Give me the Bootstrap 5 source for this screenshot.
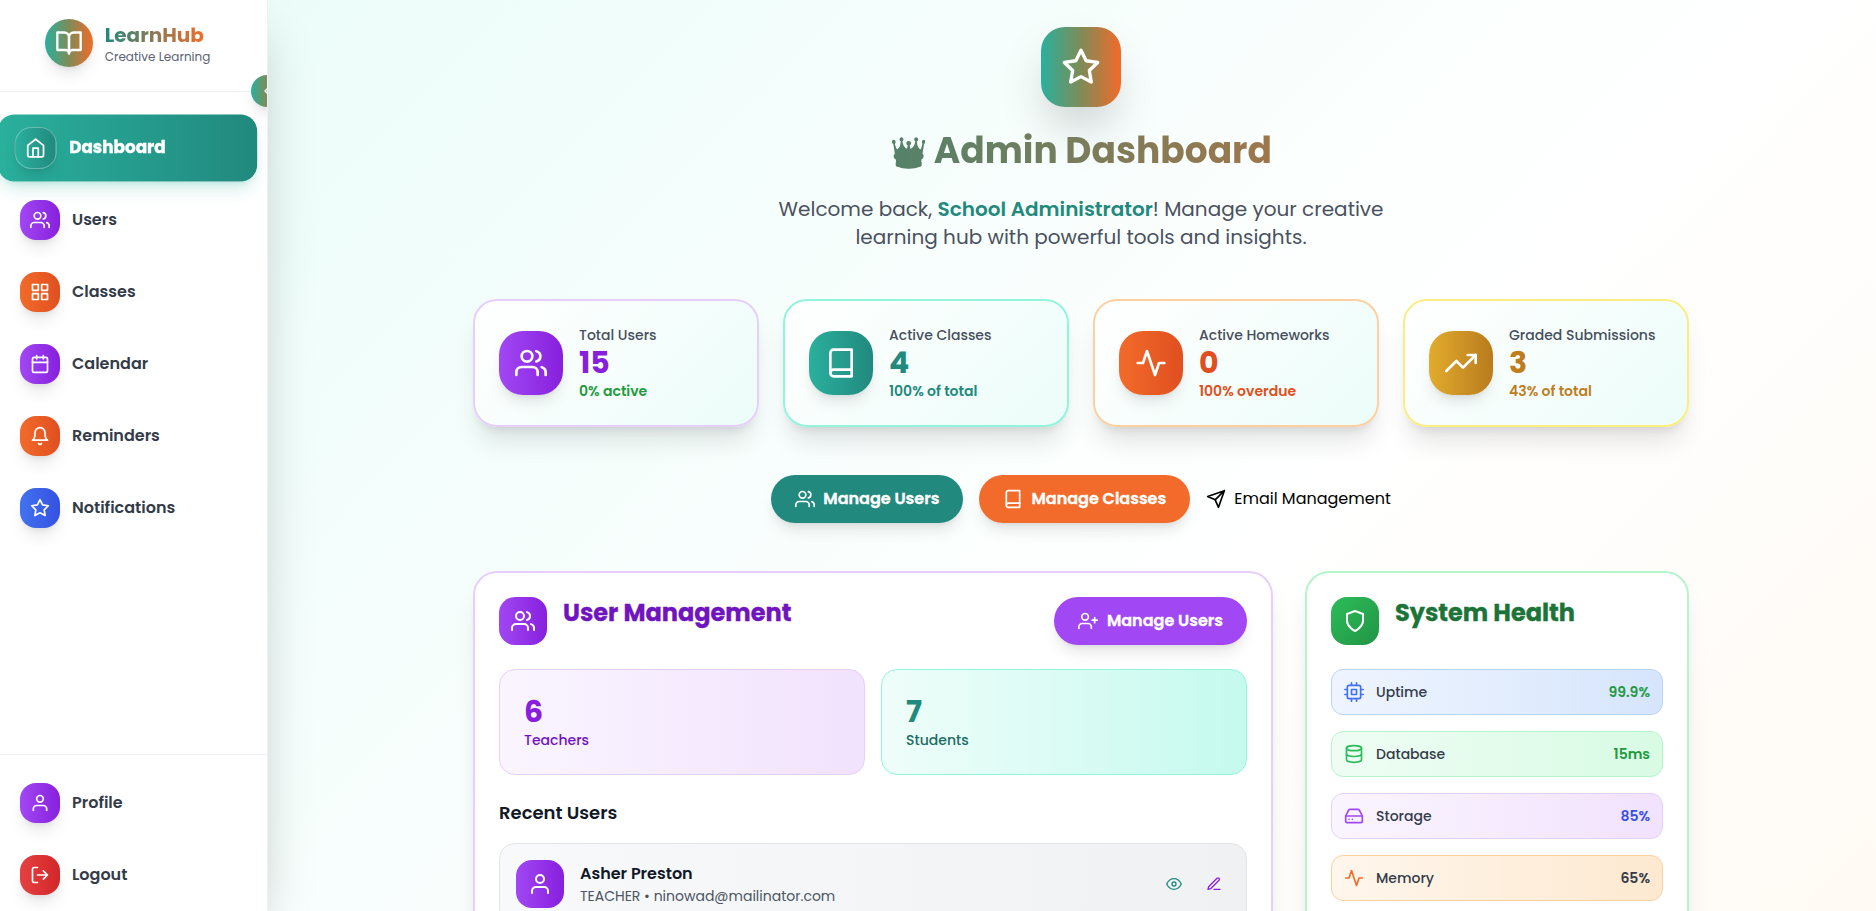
<!DOCTYPE html>
<html lang="en">
<head>
<meta charset="utf-8">
<meta name="viewport" content="width=device-width, initial-scale=1">
<title>LearnHub – Admin Dashboard</title>
<link rel="stylesheet" href="https://cdn.jsdelivr.net/npm/bootstrap@5.3.0/dist/css/bootstrap.min.css">
<style>
  :root { --teal: #21897e; --orange: #f26b2a; }
  body { font-family: Poppins, Inter, "Open Sans", sans-serif; font-size: 16px; line-height: 1.5; color: #111827; height: 100vh; overflow: hidden; background: #fff; }
  svg { fill: none; stroke: currentColor; stroke-width: 2; stroke-linecap: round; stroke-linejoin: round; flex: none; display: block; }
  a { text-decoration: none; color: inherit; }
  h1, h2, h3, p { margin: 0; }

  .g-brand { background: linear-gradient(90deg, #2ab09d, #7f8b57 50%, #f26b2a); }
  .g-teal { background: linear-gradient(90deg, #2ab09d, #21897e); }
  .g-purple { background: linear-gradient(90deg, #a147f4, #8720dd); }
  .g-orange { background: linear-gradient(90deg, #f26b2a, #e04f20); }
  .g-blue { background: linear-gradient(90deg, #4272f0, #3551e2); }
  .g-red { background: linear-gradient(90deg, #e54142, #d32628); }
  .g-gold { background: linear-gradient(90deg, #e1ac2d, #b97b1d); }
  .g-green { background: linear-gradient(135deg, #2cbd5a, #229444); }
  .text-brand { background: linear-gradient(90deg, #21897e, #f26b2a); -webkit-background-clip: text; background-clip: text; color: transparent; }
  .sh-lg { box-shadow: 0 10px 15px -3px rgba(0,0,0,.1), 0 4px 6px -4px rgba(0,0,0,.1); }

  .side { width: 268px; height: 100vh; background: #fff; border-right: 1px solid #f0f1f3; box-shadow: 0 25px 50px -12px rgba(0,0,0,.25); z-index: 2; position: relative; }
  .side-clip { overflow: hidden; height: 100%; }
  .side-head { height: 92px; border-bottom: 1px solid #f0f1f3; padding: 0 12px 6px 0; }
  .logo { width: 48px; height: 48px; }
  .brand-name { font-size: 20px; line-height: 28px; font-weight: 700; }
  .brand-sub { font-size: 12px; line-height: 16px; color: #5b6272; }
  .toggle { position: absolute; left: 251px; top: 75px; width: 32px; height: 32px; color: #fff; }
  .side-nav { padding: 24px 16px 0 4px; gap: 8px; }
  .side-foot { border-top: 1px solid #f0f1f3; padding: 16px 16px 4px 4px; gap: 8px; }
  .item { height: 64px; padding: 0 16px; gap: 12px; font-weight: 600; color: #333b49; border-radius: 16px; }
  .item .tile, .tile { display: flex; align-items: center; justify-content: center; color: #fff; flex: none; }
  .item .tile { width: 40px; height: 40px; border-radius: 16px; }
  .item.on { color: #fff; font-weight: 700; transform: scale(1.05); box-shadow: 0 10px 15px -3px rgba(42,176,157,.22), 0 4px 6px -4px rgba(42,176,157,.2); }
  .item.on .tile { border: 1px solid rgba(255,255,255,.3); }
  .item.on, .pill, .panel h2 { -webkit-text-stroke: .35px currentColor; }

  .main { margin-left: 18px; padding: 27px 32px 0; }
  .canvas-bg { background: linear-gradient(135deg, #ecfdf9 0%, #fff 50%, #fff7ed 100%) 0 0 / 100% 1500px no-repeat; }
  .wrap { width: 1216px; margin: 0 auto; }
  .hero-tile { width: 80px; height: 80px; border-radius: 24px; box-shadow: 0 25px 50px -12px rgba(0,0,0,.25); }
  .hero h1 { font-size: 36px; line-height: 40px; font-weight: 700; margin-top: 24px; background-image: linear-gradient(90deg, #21897e 13%, #f26b2a 101%); }
  .hero h1 .crown { font-size: 30px; line-height: 1; margin-right: -1px; }
  .hero p { font-size: 20px; line-height: 28px; color: #4a5160; width: 672px; margin-top: 24px; }
  .hero p b { color: var(--teal); font-weight: 600; }

  .stats { display: grid; grid-template-columns: repeat(4, 1fr); gap: 24px; margin-top: 48px; }
  .stat { height: 128px; border: 2px solid; border-radius: 24px; padding: 0 24px; gap: 16px; background: linear-gradient(135deg, #fff, #ecfdf9); box-shadow: 0 20px 25px -5px rgba(0,0,0,.1), 0 8px 10px -6px rgba(0,0,0,.1); }
  .stat .tile { width: 64px; height: 64px; border-radius: 24px; }
  .t14 { font-size: 14px; line-height: 20px; }
  .lab { font-weight: 500; color: #474e5c; }
  .num { font-size: 30px; line-height: 36px; font-weight: 700; }

  .actions { gap: 16px; margin-top: 48px; }
  .pill { height: 48px; border-radius: 24px; padding: 0 24px; gap: 8px; color: #fff; font-weight: 600; }
  .mail { gap: 8px; color: #000; }

  .panels { display: grid; grid-template-columns: 800px 384px; gap: 32px; margin-top: 48px; }
  .panel { background: #fff; border: 2px solid; border-radius: 24px; padding: 24px; height: 560px; box-shadow: 0 20px 25px -5px rgba(0,0,0,.1), 0 8px 10px -6px rgba(0,0,0,.1); }
  .panel .tile { width: 48px; height: 48px; border-radius: 16px; }
  .panel h2 { font-size: 24px; line-height: 32px; font-weight: 700; }
  .panel .pill { gap: 9px; }
  .counts { display: grid; grid-template-columns: 1fr 1fr; gap: 16px; margin-top: 24px; }
  .count { border: 1px solid; border-radius: 16px; padding: 24px; height: 106px; }
  .panel h3 { font-size: 18px; line-height: 28px; font-weight: 600; margin: 24px 0 16px; }
  .user { border: 1px solid #e2e4e8; border-radius: 16px; padding: 16px; height: 82px; background: linear-gradient(90deg, #f8f9fb, #f0f1f3); }
  .tools { gap: 24px; padding-right: 8px; }
  .health { height: 46px; border: 1px solid; border-radius: 12px; padding: 0 12px; margin-bottom: 16px; gap: 12px; color: #343c4a; font-weight: 500; }
</style>
</head>
<body>
<svg width="0" height="0" class="position-absolute">
  <symbol id="users" viewBox="0 0 24 24"><path d="M17 21v-2a4 4 0 0 0-4-4H5a4 4 0 0 0-4 4v2"/><circle cx="9" cy="7" r="4"/><path d="M23 21v-2a4 4 0 0 0-3-3.870"/><path d="M16 3.130a4 4 0 0 1 0 7.750"/></symbol>
  <symbol id="user" viewBox="0 0 24 24"><path d="M20 21v-2a4 4 0 0 0-4-4H8a4 4 0 0 0-4 4v2"/><circle cx="12" cy="7" r="4"/></symbol>
  <symbol id="userplus" viewBox="0 0 24 24"><path d="M16 21v-2a4 4 0 0 0-4-4H5a4 4 0 0 0-4 4v2"/><circle cx="8.500" cy="7" r="4"/><path d="M20 8v6M23 11h-6"/></symbol>
  <symbol id="star" viewBox="0 0 24 24"><path d="M12 2l3.090 6.260L22 9.270l-5 4.870 1.180 6.880L12 17.770l-6.180 3.250L7 14.140 2 9.270l6.910-1.010z"/></symbol>
  <symbol id="book" viewBox="0 0 24 24"><path d="M4 19.500A2.500 2.500 0 0 1 6.500 17H20"/><path d="M6.500 2H20v20H6.500A2.500 2.500 0 0 1 4 19.500v-15A2.500 2.500 0 0 1 6.500 2z"/></symbol>
  <symbol id="pulse" viewBox="0 0 24 24"><path d="M22 12h-4l-3 9L9 3l-3 9H2"/></symbol>
</svg>

<div class="d-flex h-100">
  <aside class="side flex-shrink-0">
    <div class="side-clip d-flex flex-column position-relative">
      <div class="side-head d-flex align-items-center justify-content-center gap-2 flex-shrink-0">
        <div class="logo g-brand rounded-circle d-flex align-items-center justify-content-center text-white sh-lg me-1">
          <svg width="28" height="28" viewBox="0 0 24 24"><path d="M2 3h6a4 4 0 0 1 4 4v14a3 3 0 0 0-3-3H2z"/><path d="M22 3h-6a4 4 0 0 0-4 4v14a3 3 0 0 1 3-3h7z"/></svg>
        </div>
        <div>
          <div class="brand-name"><span class="text-brand">LearnHub</span></div>
          <div class="brand-sub">Creative Learning</div>
        </div>
      </div>
      <button class="toggle g-brand rounded-circle border-0 p-0 d-flex align-items-center justify-content-center sh-lg" aria-label="Collapse">
        <svg width="16" height="16" viewBox="0 0 24 24"><path d="M15 18l-6-6 6-6"/></svg>
      </button>
      <nav class="side-nav d-flex flex-column flex-grow-1">
        <a href="#" class="item on g-teal d-flex align-items-center"><span class="tile g-teal sh-lg"><svg width="20" height="20" viewBox="0 0 24 24"><path d="M3 9l9-7 9 7v11a2 2 0 0 1-2 2H5a2 2 0 0 1-2-2z"/><path d="M9 22V12h6v10"/></svg></span>Dashboard</a>
        <a href="#" class="item d-flex align-items-center"><span class="tile g-purple sh-lg"><svg width="20" height="20"><use href="#users"/></svg></span>Users</a>
        <a href="#" class="item d-flex align-items-center"><span class="tile g-orange sh-lg"><svg width="20" height="20" viewBox="0 0 24 24"><path d="M3 3h7v7H3zM14 3h7v7h-7zM14 14h7v7h-7zM3 14h7v7H3z"/></svg></span>Classes</a>
        <a href="#" class="item d-flex align-items-center"><span class="tile g-purple sh-lg"><svg width="20" height="20" viewBox="0 0 24 24"><rect x="3" y="4" width="18" height="18" rx="2"/><path d="M16 2v4M8 2v4M3 10h18"/></svg></span>Calendar</a>
        <a href="#" class="item d-flex align-items-center"><span class="tile g-orange sh-lg"><svg width="20" height="20" viewBox="0 0 24 24"><path d="M18 8A6 6 0 0 0 6 8c0 7-3 9-3 9h18s-3-2-3-9"/><path d="M13.730 21a2 2 0 0 1-3.460 0"/></svg></span>Reminders</a>
        <a href="#" class="item d-flex align-items-center"><span class="tile g-blue sh-lg"><svg width="20" height="20"><use href="#star"/></svg></span>Notifications</a>
      </nav>
      <div class="side-foot d-flex flex-column">
        <a href="#" class="item d-flex align-items-center"><span class="tile g-purple sh-lg"><svg width="20" height="20"><use href="#user"/></svg></span>Profile</a>
        <a href="#" class="item d-flex align-items-center"><span class="tile g-red sh-lg"><svg width="20" height="20" viewBox="0 0 24 24"><path d="M9 21H5a2 2 0 0 1-2-2V5a2 2 0 0 1 2-2h4"/><path d="M16 17l5-5-5-5M21 12H9"/></svg></span>Logout</a>
      </div>
    </div>
  </aside>

  <div class="canvas-bg flex-grow-1 overflow-hidden">
    <main class="main">
      <div class="wrap">
        <header class="hero d-flex flex-column align-items-center text-center">
          <div class="hero-tile g-brand tile"><svg width="40" height="40"><use href="#star"/></svg></div>
          <h1 class="text-brand w-100"><span class="crown">👑</span> Admin Dashboard</h1>
          <p>Welcome back, <b>School Administrator</b>! Manage your creative learning hub with powerful tools and insights.</p>
        </header>

        <section class="stats">
          <div class="stat d-flex align-items-center" style="border-color:#e6cffc">
            <span class="tile g-purple sh-lg"><svg width="32" height="32"><use href="#users"/></svg></span>
            <div><div class="t14 lab">Total Users</div><div class="num" style="color:#8720dd">15</div><div class="t14 fw-semibold" style="color:#229a3f">0% active</div></div>
          </div>
          <div class="stat d-flex align-items-center" style="border-color:#93f4dd">
            <span class="tile g-teal sh-lg"><svg width="32" height="32"><use href="#book"/></svg></span>
            <div><div class="t14 lab">Active Classes</div><div class="num" style="color:#21897e">4</div><div class="t14 fw-semibold" style="color:#21897e">100% of total</div></div>
          </div>
          <div class="stat d-flex align-items-center" style="border-color:#fcd0a1">
            <span class="tile g-orange sh-lg"><svg width="32" height="32"><use href="#pulse"/></svg></span>
            <div><div class="t14 lab">Active Homeworks</div><div class="num" style="color:#e04f20">0</div><div class="t14 fw-semibold" style="color:#e04f20">100% overdue</div></div>
          </div>
          <div class="stat d-flex align-items-center" style="border-color:#fbee80">
            <span class="tile g-gold sh-lg"><svg width="32" height="32" viewBox="0 0 24 24"><path d="M23 6l-9.500 9.500-5-5L1 18"/><path d="M17 6h6v6"/></svg></span>
            <div><div class="t14 lab">Graded Submissions</div><div class="num" style="color:#bf7d1c">3</div><div class="t14 fw-semibold" style="color:#bf7d1c">43% of total</div></div>
          </div>
        </section>

        <div class="actions d-flex justify-content-center">
          <a href="#" class="pill d-flex align-items-center sh-lg" style="background:#21897e"><svg width="20" height="20"><use href="#users"/></svg>Manage Users</a>
          <a href="#" class="pill d-flex align-items-center sh-lg" style="background:#f26b2a"><svg width="20" height="20"><use href="#book"/></svg>Manage Classes</a>
          <a href="#" class="mail d-flex align-items-center"><svg width="20" height="20" viewBox="0 0 24 24"><path d="M22 2L11 13M22 2l-7 20-4-9-9-4z"/></svg>Email Management</a>
        </div>

        <div class="panels">
          <section class="panel" style="border-color:#e6cffc">
            <div class="d-flex justify-content-between">
              <div class="d-flex gap-3">
                <span class="tile g-purple"><svg width="24" height="24"><use href="#users"/></svg></span>
                <h2 style="color:#7014bf">User Management</h2>
              </div>
              <a href="#" class="pill d-flex align-items-center sh-lg" style="background:#a147f4"><svg width="20" height="20"><use href="#userplus"/></svg>Manage Users</a>
            </div>
            <div class="counts">
              <div class="count" style="border-color:#e6cffc;background:linear-gradient(90deg,#faf5ff,#f1e2fd)"><div class="num" style="color:#8720dd">6</div><div class="t14" style="color:#7014bf;font-weight:500">Teachers</div></div>
              <div class="count" style="border-color:#93f4dd;background:linear-gradient(90deg,#effdfa,#c5faee)"><div class="num" style="color:#21897e">7</div><div class="t14" style="color:#206b62;font-weight:500">Students</div></div>
            </div>
            <h3>Recent Users</h3>
            <div class="user d-flex align-items-center gap-3">
              <span class="tile g-purple"><svg width="24" height="24"><use href="#user"/></svg></span>
              <div class="flex-grow-1">
                <div class="fw-semibold">Asher Preston</div>
                <div class="t14" style="color:#4b5563">TEACHER • ninowad@mailinator.com</div>
              </div>
              <div class="tools d-flex align-items-center">
                <a href="#" style="color:#21897e"><svg width="16" height="16" viewBox="0 0 24 24"><path d="M1 12s4-8 11-8 11 8 11 8-4 8-11 8-11-8-11-8z"/><circle cx="12" cy="12" r="3"/></svg></a>
                <a href="#" style="color:#8720dd"><svg width="16" height="16" viewBox="0 0 24 24"><path d="M12 20h9"/><path d="M16.500 3.500a2.120 2.120 0 0 1 3 3L7 19l-4 1 1-4z"/></svg></a>
              </div>
            </div>
          </section>

          <section class="panel" style="border-color:#b5f5cc">
            <div class="d-flex gap-3 mb-4">
              <span class="tile g-green"><svg width="24" height="24" viewBox="0 0 24 24"><path d="M12 22s8-4 8-10V5l-8-3-8 3v7c0 6 8 10 8 10z"/></svg></span>
              <h2 style="color:#1d7439">System Health</h2>
            </div>
            <div class="health t14 d-flex align-items-center" style="border-color:#b9d4fb;background:linear-gradient(90deg,#eff5ff,#d6e5fc)"><svg width="20" height="20" viewBox="0 0 24 24" style="color:#4272f0"><rect x="4" y="4" width="16" height="16" rx="2"/><rect x="9" y="9" width="6" height="6"/><path d="M9 1v3M15 1v3M9 20v3M15 20v3M20 9h3M20 15h3M1 9h3M1 15h3"/></svg>Uptime<span class="ms-auto fw-semibold" style="color:#229a3f">99.9%</span></div>
            <div class="health t14 d-flex align-items-center" style="border-color:#b5f5cc;background:linear-gradient(90deg,#effdf4,#d8fbe4)"><svg width="20" height="20" viewBox="0 0 24 24" style="color:#2cbd5a"><ellipse cx="12" cy="5" rx="9" ry="3"/><path d="M21 12c0 1.660-4 3-9 3s-9-1.340-9-3"/><path d="M3 5v14c0 1.660 4 3 9 3s9-1.340 9-3V5"/></svg>Database<span class="ms-auto fw-semibold" style="color:#229a3f">15ms</span></div>
            <div class="health t14 d-flex align-items-center" style="border-color:#e6cffc;background:linear-gradient(90deg,#faf5ff,#f1e2fd)"><svg width="20" height="20" viewBox="0 0 24 24" style="color:#a147f4"><path d="M22 12H2"/><path d="M5.450 5.110L2 12v6a2 2 0 0 0 2 2h16a2 2 0 0 0 2-2v-6l-3.450-6.890A2 2 0 0 0 16.760 4H7.240a2 2 0 0 0-1.790 1.110z"/><path d="M6 16h.01M10 16h.01"/></svg>Storage<span class="ms-auto fw-semibold" style="color:#3551e2">85%</span></div>
            <div class="health t14 d-flex align-items-center" style="border-color:#fcd0a1;background:linear-gradient(90deg,#fff6ec,#fde9d0)"><svg width="20" height="20" style="color:#f26b2a"><use href="#pulse"/></svg>Memory<span class="ms-auto fw-semibold">65%</span></div>
          </section>
        </div>
      </div>
    </main>
  </div>
</div>
<script src="https://cdn.jsdelivr.net/npm/bootstrap@5.3.0/dist/js/bootstrap.bundle.min.js"></script>
</body>
</html>
